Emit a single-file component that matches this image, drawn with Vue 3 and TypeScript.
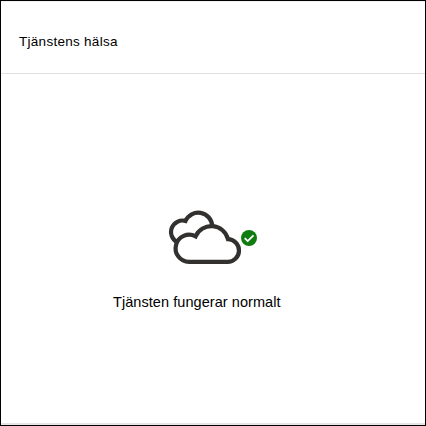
<script setup lang="ts">
const title: string = 'Tjänstens hälsa'
const status: string = 'Tjänsten fungerar normalt'
</script>

<template>
  <section class="card">
    <header class="head"><span class="title">{{ title }}</span></header>
    <div class="content">
      <svg class="icon" width="92" height="56" viewBox="168 209 92 56" aria-hidden="true">
        <g fill="none" stroke="#323130" stroke-width="4.2">
          <path d="M177.2 242.2A11.5 11.5 0 0 1 185.5 220.9A14 14 0 0 1 212.2 225.6" />
          <path d="M189 261.9A13.6 13.6 0 1 1 195.6 236.3A17.2 17.2 0 0 1 228 239.2A11.3 11.3 0 0 1 227.3 261.9Z" />
        </g>
        <circle cx="249" cy="238" r="8" fill="#107c10" />
        <path d="M244.7 238.2L247.7 241.1L253.5 235.3" fill="none" stroke="#fff" stroke-width="1.8" />
      </svg>
      <p class="status">{{ status }}</p>
    </div>
  </section>
</template>

<style>
body {
  margin: 0;
  background: #fff;
}
</style>

<style scoped>
.card {
  box-sizing: border-box;
  width: 426px;
  height: 426px;
  border: 1px solid #000;
  box-shadow: inset 0 -2px #e6e6e6, inset 0 1px #f3f0f6;
  display: flex;
  flex-direction: column;
  font-family: "Liberation Sans", Arial, sans-serif;
  color: #000;
}
.head {
  box-sizing: border-box;
  height: 73px;
  padding: 33px 18px 0;
  border-bottom: 1px solid #e1e1e1;
}
.title {
  display: block;
  font-size: 13.5px;
  line-height: 16px;
  letter-spacing: 0.28px;
}
.content {
  padding: 135px 0 0 112px;
}
.icon {
  display: block;
  margin-left: 55px;
}
.status {
  margin: 28px 0 0;
  font-size: 14.5px;
  line-height: 18px;
  letter-spacing: 0.06px;
  white-space: nowrap;
}
</style>
